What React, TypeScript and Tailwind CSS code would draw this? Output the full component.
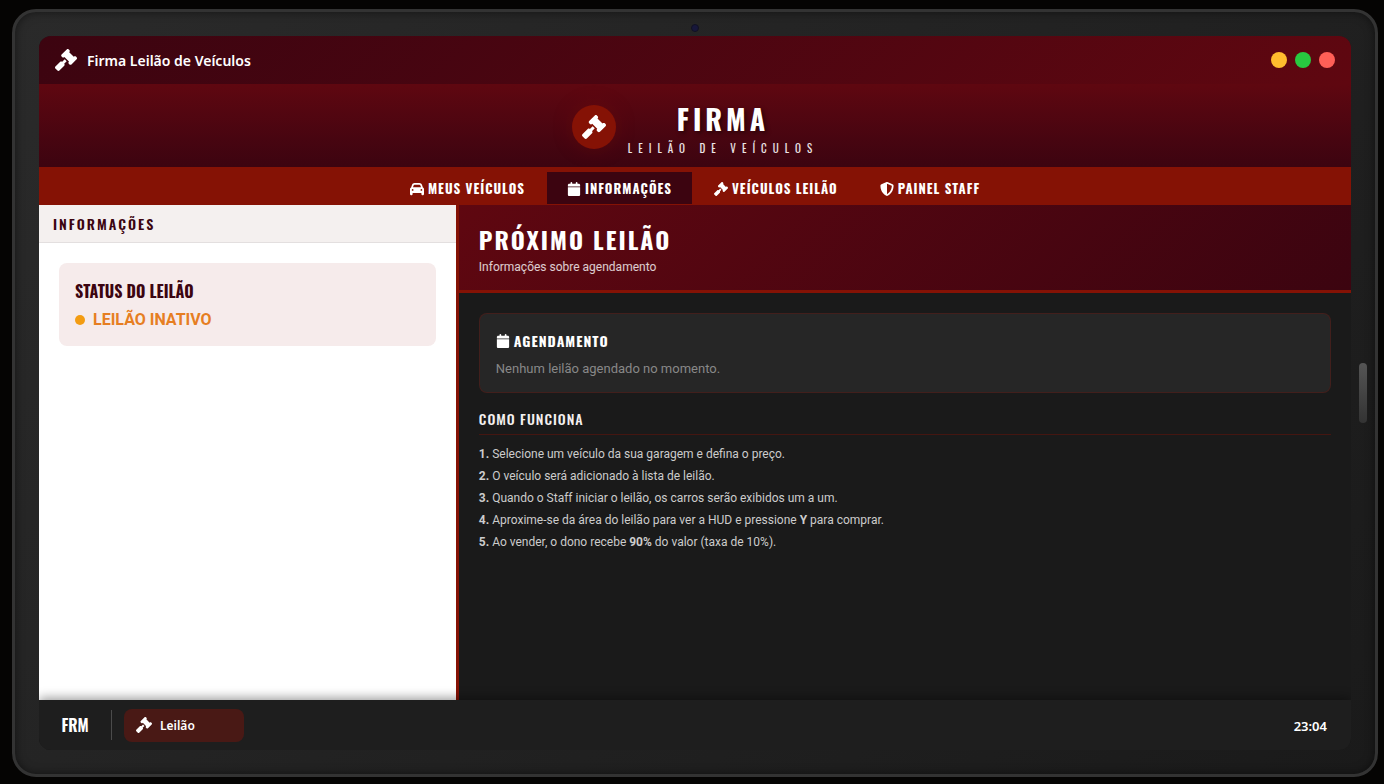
import type { ReactNode } from "react";
import { FaCalendar, FaCar, FaGavel, FaShieldHalved } from "react-icons/fa6";

const display = "font-['Oswald','Liberation_Sans_Narrow','Roboto',sans-serif]";

const tabs = [
  { label: "Meus Veículos", icon: FaCar, active: false },
  { label: "Informações", icon: FaCalendar, active: true },
  { label: "Veículos Leilão", icon: FaGavel, active: false },
  { label: "Painel Staff", icon: FaShieldHalved, active: false },
];

const steps: ReactNode[] = [
  "Selecione um veículo da sua garagem e defina o preço.",
  "O veículo será adicionado à lista de leilão.",
  "Quando o Staff iniciar o leilão, os carros serão exibidos um a um.",
  <>Aproxime-se da área do leilão para ver a HUD e pressione <b>Y</b> para comprar.</>,
  <>Ao vender, o dono recebe <b>90%</b> do valor (taxa de 10%).</>,
];

function TitleBar() {
  return (
    <header className="flex h-12 shrink-0 items-center justify-between bg-linear-135 from-[#3c0410] to-[#5f0710] px-4 text-white">
      <div className="flex items-center gap-2.5 font-['Noto_Sans',sans-serif] text-sm font-semibold">
        <FaGavel className="size-[22px]" />
        <span className="pt-0.5">Firma Leilão de Veículos</span>
      </div>
      <div className="flex gap-2">
        <button aria-label="Minimizar" className="size-4 rounded-full bg-[#ffbd2e]" />
        <button aria-label="Maximizar" className="size-4 rounded-full bg-[#28c940]" />
        <button aria-label="Fechar" className="size-4 rounded-full bg-[#ff5f57]" />
      </div>
    </header>
  );
}

function Brand() {
  return (
    <div className="flex h-[83px] shrink-0 items-center justify-center gap-3 bg-linear-to-b from-[#5f0710] to-[#3c0410] pt-0.5 text-white">
      <div className="flex size-11 items-center justify-center rounded-full bg-[#851205] shadow-[0_0_20px_rgba(133,18,5,0.3)]">
        <FaGavel className="size-6" />
      </div>
      <div className={`${display} flex flex-col items-center`}>
        <h1 className="text-[28px] leading-[42px] font-bold tracking-[4px] [text-shadow:2px_2px_4px_rgba(0,0,0,0.5)]">FIRMA</h1>
        <p className="text-[11px] leading-4 font-normal tracking-[6px] text-white/90">LEILÃO DE VEÍCULOS</p>
      </div>
    </div>
  );
}

function Nav() {
  return (
    <nav className="flex h-[38px] shrink-0 items-center justify-center gap-0.5 bg-[#851205] pt-1">
      {tabs.map(({ label, icon: Icon, active }) => (
        <button
          key={label}
          className={`${display} flex h-8 items-center gap-1 px-5 pt-0.5 text-[13px] font-bold tracking-[1px] text-white uppercase ${active ? "bg-[#3c0410]" : ""}`}
        >
          <Icon className="size-3.5" />
          {label}
        </button>
      ))}
    </nav>
  );
}

function Sidebar() {
  return (
    <aside className="w-[32%] shrink-0 border-r-3 border-[#851205] bg-white">
      <h2 className={`${display} flex h-[38px] items-center border-b border-[#e3dfdf] bg-[#f4f0ef] px-3.5 text-sm font-semibold tracking-[2px] text-[#3c0410]`}>
        INFORMAÇÕES
      </h2>
      <section className="m-5 rounded-lg bg-[#f6ebeb] px-4 pt-4 pb-3.5">
        <h3 className={`${display} text-base leading-6 font-bold text-[#3c0410]`}>STATUS DO LEILÃO</h3>
        <p className="mt-1 flex items-center gap-2 text-base leading-[25px] font-bold text-[#e67e22]">
          <span className="size-2.5 rounded-full bg-[#f39c12]" />
          LEILÃO INATIVO
        </p>
      </section>
    </aside>
  );
}

function Details() {
  return (
    <main className="flex min-w-0 flex-1 flex-col bg-[#1a1a1a]">
      <div className="h-[88px] shrink-0 border-b-3 border-[#851205] bg-linear-135 from-[#5f0710] to-[#3c0410] px-5 pt-4 text-white">
        <h2 className={`${display} text-2xl leading-9 font-bold tracking-[2px]`}>PRÓXIMO LEILÃO</h2>
        <p className="text-xs leading-5 text-white/80">Informações sobre agendamento</p>
      </div>
      <div className="p-5">
        <section className="h-20 rounded-lg border border-[#851205]/30 bg-[#262626] px-4 pt-4">
          <h3 className={`${display} flex items-center gap-1 text-sm leading-[22px] font-bold tracking-[1px] text-white`}>
            <FaCalendar className="size-3.5" />
            AGENDAMENTO
          </h3>
          <p className="mt-1.5 text-[13px] leading-[22px] text-[#888888]">Nenhum leilão agendado no momento.</p>
        </section>
        <h3 className={`${display} mt-4 border-b border-[#851205]/40 pb-[5px] text-sm leading-5 font-medium tracking-[1px] text-[#f4f0ef]`}>
          COMO FUNCIONA
        </h3>
        <ol className="mt-2 flex flex-col text-xs text-[#cccccc]">
          {steps.map((step, i) => (
            <li key={i} className="leading-[22px]">
              <b>{i + 1}.</b> {step}
            </li>
          ))}
        </ol>
      </div>
    </main>
  );
}

function Taskbar() {
  return (
    <footer className="relative flex h-[50px] shrink-0 items-center justify-between bg-[#1e1e1e] px-3 font-['Noto_Sans',sans-serif] text-xs font-semibold text-white shadow-[0_-2px_10px_rgba(0,0,0,0.4)]">
      <div className="flex items-center">
        <button className={`${display} w-12 text-base font-semibold`}>FRM</button>
        <span className="mx-3 h-[30px] w-px bg-white/20" />
        <button className="flex h-[33px] w-[120px] items-center gap-2 rounded-lg bg-[#491915] px-3">
          <FaGavel className="size-4" />
          <span className="pt-0.5">Leilão</span>
        </button>
      </div>
      <time className="px-3 pt-1 text-[13px]">23:04</time>
    </footer>
  );
}

export default function App() {
  return (
    <div className="h-screen bg-[#050403] pt-[9px] pr-1.5 pb-[7px] pl-3 font-['Roboto',sans-serif]">
      <div className="relative h-full rounded-[24px] border-3 border-[#333333] bg-linear-135 from-[#2a2a2a] to-[#1a1a1a] p-6 shadow-[inset_0_0_10px_rgba(0,0,0,0.5)]">
        <span className="absolute top-3 left-1/2 size-2 -translate-x-1/2 rounded-full border border-[#111122] bg-[#17173b]" />
        <span className="absolute top-1/2 right-2 h-[60px] w-2 -translate-y-1/2 rounded bg-linear-to-b from-[#555555] to-[#333333]" />
        <div className="flex h-full flex-col overflow-hidden rounded-xl bg-[#1a1a1a]">
          <TitleBar />
          <Brand />
          <Nav />
          <div className="flex min-h-0 flex-1">
            <Sidebar />
            <Details />
          </div>
          <Taskbar />
        </div>
      </div>
    </div>
  );
}
